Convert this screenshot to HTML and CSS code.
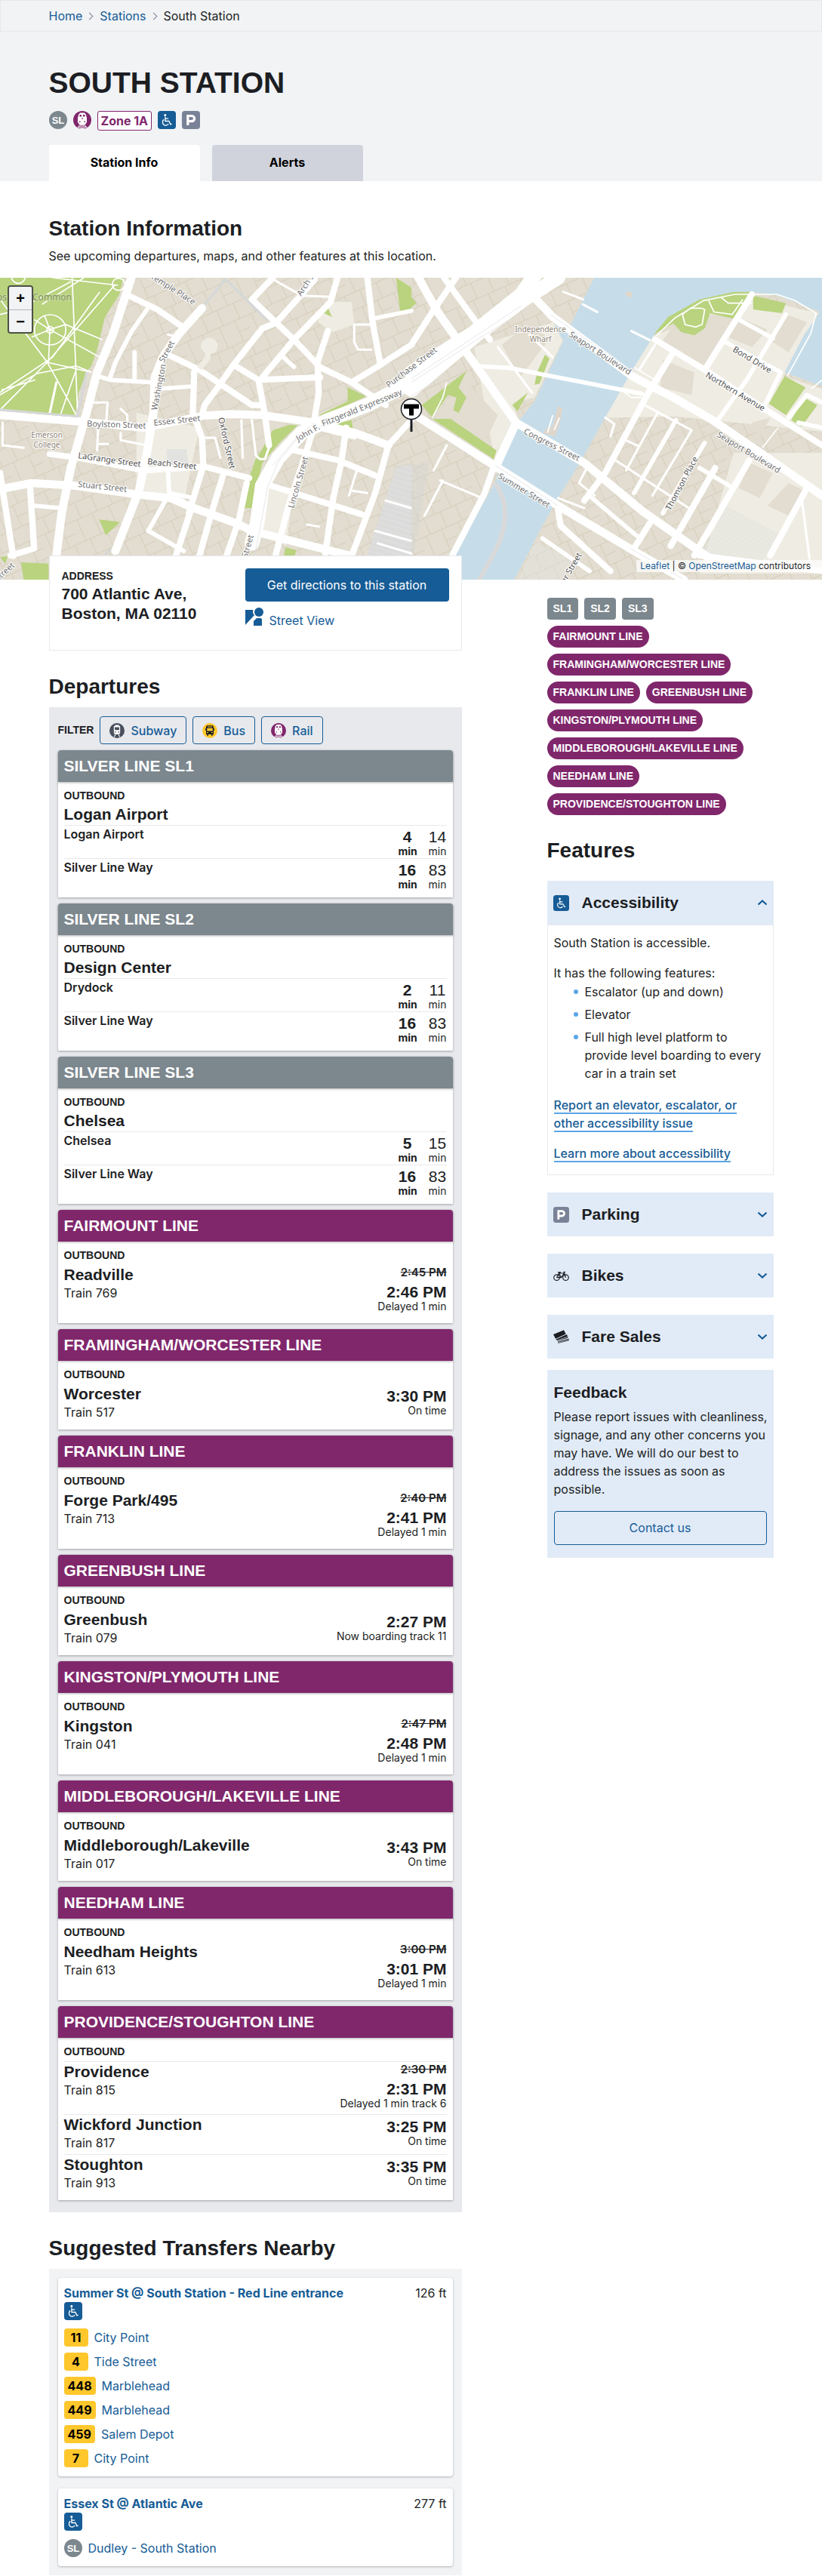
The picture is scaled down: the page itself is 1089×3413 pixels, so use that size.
FILE: index.html
```html
<!DOCTYPE html>
<html lang="en">
<head>
<meta charset="utf-8">
<meta name="viewport" content="width=device-width, initial-scale=1">
<title>South Station | MBTA</title>
<link rel="stylesheet" href="styles.css">
</head>
<body>
<svg class="sprite" aria-hidden="true">
  <symbol id="i-access" viewBox="0 0 24 24">
    <rect width="24" height="24" rx="4" fill="#165c96"/>
    <circle cx="9.8" cy="5.6" r="1.5" fill="#fff"/>
    <path d="M9.9 7.5v6h5l2 4.300 1.700-.7M10 10.200h4.200M8.200 11.400a4.200 4.200 0 1 0 6 5.600" fill="none" stroke="#fff" stroke-width="1.300"/>
  </symbol>
  <symbol id="i-parking" viewBox="0 0 24 24">
    <rect width="24" height="24" rx="4" fill="#7a8297"/>
    <path d="M7.800 19V6.500h5.200a3.500 3.500 0 0 1 0 7.200H7.800" fill="none" stroke="#fff" stroke-width="3.200"/>
  </symbol>
  <symbol id="i-sl" viewBox="0 0 24 24">
    <circle cx="12" cy="12" r="12" fill="#7c878e"/>
    <text x="12" y="16.500" class="sl-text">SL</text>
  </symbol>
  <symbol id="i-rail" viewBox="0 0 24 24">
    <circle cx="12" cy="12" r="12" fill="#80276c"/>
    <path d="M7 5 9 2.500h6L17 5l1 5v5l-2.500 3.500h-7L6 15v-5z" fill="#fff"/>
    <path d="M8.500 18.500h7l3 3.500a12 12 0 0 1-13 0z" fill="#fff"/>
    <path d="M8 20h8M7 22h10" stroke="#80276c" stroke-width="1"/>
    <path d="M8.500 5H11v2.500H8.500zM13 5h2.500v2.500H13zM11.400 9h1.200v2h-1.200zM7.900 13.500h1.600V15H7.900zM14.500 13.500h1.600V15h-1.600z" fill="#80276c"/>
  </symbol>
  <symbol id="i-subway" viewBox="0 0 24 24">
    <circle cx="12" cy="12" r="12" fill="#494f5c"/>
    <path d="M9 3h6v1.500h1.500L17 6v10l-1.500 2h-7L7 16V6l.5-1.500H9z" fill="#fff"/>
    <path d="M8.500 6.500h7v4.500h-7zM8.300 13.500h2V15h-2zM13.700 13.500h2V15h-2z" fill="#494f5c"/>
    <path d="m9.500 18.500-2 3.500M14.500 18.500l2 3.500" stroke="#fff" stroke-width="1.400"/>
  </symbol>
  <symbol id="i-bus" viewBox="0 0 24 24">
    <circle cx="12" cy="12" r="12" fill="#ffc72c"/>
    <path d="M7.500 4h9L18 6v12h-1.500v2h-2v-2h-5v2h-2v-2H6V6zM5 8h1v4H5zM18 8h1v4h-1z" fill="#1c1e23"/>
    <path d="M8.500 5.500h7v1h-7zM7.500 8h9v4.500h-9zM7.500 14.500h2V16h-2zM14.500 14.500h2V16h-2z" fill="#ffc72c"/>
  </symbol>
  <symbol id="i-street" viewBox="0 0 24 24">
    <path d="M0 3h10.500a6.500 6.500 0 0 0 1.500 7L0 23zM11 24V18l4-4h5q2 0 2 2v8z" fill="#165c96"/>
    <circle cx="18" cy="6" r="6" fill="#165c96"/>
  </symbol>
  <symbol id="i-bike" viewBox="0 0 24 24">
    <g fill="none" stroke="#1c1e23" stroke-width="1.400">
      <circle cx="5.200" cy="14.500" r="4.300"/><circle cx="18.800" cy="14.500" r="4.300"/>
      <path d="M5.200 14.500 8.500 8h8L12 14.500H5.200M8.500 8l3.500 6.500M18.800 14.500 16 6h2.500M7 6.500h3.500L9 8"/>
    </g>
  </symbol>
  <symbol id="i-fare" viewBox="0 0 24 24">
    <path d="M0 8 16 1.500l3 6L3.500 14.500z" fill="#1c1e23"/>
    <path d="M4 15.500 20.500 8l2 5-16 5zM6.500 19l17-4.500.5 3-16.500 4z" fill="#1c1e23"/>
    <path d="m5 17.500 16.500-6M7 20.500l17-4" stroke="#e1ebf7" stroke-width=".8"/>
  </symbol>
  <symbol id="i-chevron" viewBox="0 0 14 8">
    <path d="m1.500 1.500 5.500 5 5.500-5" fill="none" stroke="#165c96" stroke-width="2.200"/>
  </symbol>
</svg>

<header class="page-header">
  <nav class="breadcrumbs" aria-label="Breadcrumb">
    <ol class="container">
      <li><a href="#">Home</a></li>
      <li><a href="#">Stations</a></li>
      <li>South Station</li>
    </ol>
  </nav>
  <div class="container">
    <h1>SOUTH STATION</h1>
    <div class="header-icons">
      <svg class="icon"><use href="#i-sl"/></svg>
      <svg class="icon"><use href="#i-rail"/></svg>
      <span class="zone">Zone 1A</span>
      <svg class="icon"><use href="#i-access"/></svg>
      <svg class="icon"><use href="#i-parking"/></svg>
    </div>
    <nav class="tabs" aria-label="Station pages">
      <a class="tab is-active" href="#">Station Info</a>
      <a class="tab" href="#">Alerts</a>
    </nav>
  </div>
</header>

<section class="container intro">
  <h2>Station Information</h2>
  <p>See upcoming departures, maps, and other features at this location.</p>
</section>

<div class="map">
  <svg class="map-canvas" viewBox="0 0 1089 400" preserveAspectRatio="xMidYMid slice" role="img" aria-label="Map around South Station">
    <defs>
      <pattern id="lots" width="46" height="52" patternUnits="userSpaceOnUse" patternTransform="rotate(-24)">
        <path d="M0 .5h46M14.500 0v22M30.500 22v30M0 22.500h46M8.500 22v30M38.500 0v22M30 38.500h16" fill="none" stroke="#d6cebc" stroke-width="1"/>
      </pattern>
      <pattern id="tracks" width="7" height="20" patternUnits="userSpaceOnUse" patternTransform="rotate(18)">
        <path d="M2 0v16M5 6v14" stroke="#d2d3d5" stroke-width="2"/>
      </pattern>
      <pattern id="bays" width="9" height="9" patternUnits="userSpaceOnUse" patternTransform="rotate(28)">
        <path d="M2 0v9" stroke="#e3e4df" stroke-width="5"/>
      </pattern>
    </defs>
    <rect width="1089" height="400" fill="#e2ddd0"/>
    <rect width="1089" height="400" fill="url(#lots)"/>

    <g class="west" transform="matrix(.3476 0 0 .3333 0 -8)">
      <path d="M1240 120h100l10 90-80 30-60-40zM520 560l240 60-60 300-180-60zM1030 850l90 10-30 230-90-60z" fill="#efece3"/>
      <path class="park" d="M0 24h470l-15 66-55 90-30 130-20 60-20 30-30 80-15 105-285-37zM1510 24l58 40v90l-43 6zM1325 460l70 35-65 32-5 25 70-22-4 18-170 60v-40l104-53zM1210 612l130-22 5 30-45 36zM1100 610h35l-70 70-65 80-40 180h-30l20-120 22-70 30-50 38-70zM378 985l80 10-55 52zM1088 1095l42 12-8 24-40-4zM0 1135l30-5-10 30zM80 1155l105 5v64H90zM1225 160l20-30 20 50z"/>
      <path d="M635 705h75l10 65-85-5zM1510 780l58-10v360h-170z" fill="#e2e2e0"/>
      <path d="M1510 770l58-10v370h-170z" fill="url(#tracks)"/>
      <g id="west-roads" class="roads">
        <path class="l" d="M505 10 430 250l-60 150-40 160-60 220-35 180-20 168"/>
        <path class="l" d="m0 570 300 25 250 25 230-48 100-6 120 4 200 30 150 40 130 50"/>
        <path class="l" d="m770 145-90 105-60 90-30 80-5 140-25 160-30 150-90 240"/>
        <path class="m" d="m480 90 120 60 90 65M1040 24l-80 86 80 80 90 90 90 100 120 60 130 90M740 400l-5 160 35 100 5 110-55 190"/>
        <path class="m" d="m640 330 120 60 200 140h40M1200 30l-50 60-100 115-50 20-110 145-60 90-50 70-10 40M1290 10l-30 110-140 150-120 150M890 370l95 60 235-10M985 430l25 140 15 120"/>
        <path class="m" d="m1400 24 20 176 30 170-110 70M1568 290l-118 80M1250 235l-40 125 5 120-25 160-30 100-60 190-50 198"/>
        <path class="x" d="m1568 440-168 90-150 60-100 50-90 100-60 110-20 150-20 80"/>
        <path class="m" d="m1120 710 170 40 140 60M1320 620l-20 140-30 140-30 220M1568 590l-88 100-50 190-90 250M1200 615l150 40"/>
        <path class="m" d="m190 725 110 15 250 50 230-15 170 45M1030 850l350 115"/>
        <path class="l" d="m0 865 120-25 160 10 240 35 130 15 90 40 160 60 60 30 370 98"/>
        <path class="m" d="m850 810-50 170-40 150M940 840l-30 150-50 150M0 800l50 330M115 860l15 240-90 28M730 940l-60 190"/>
        <path class="s" d="m560 150-60 90-60 120-20 60M370 415l50 15 160 10M513 320v110M610 465l130-10M130 930l105 10M640 790l5 90 95 20M630 910l-65 120 135 80M1430 185l138-30M1080 340l40 38"/>
        <path class="t" d="M350 520h60l-5 80M375 600l-5 110M372 685h40M460 545l25 25v50M460 640v30l90 18M780 660h40l20 80M920 590l5 150M960 590l15 140 15 15h20l15-45M1350 210h70M1350 210v70l15 30h50M1040 30l110 65 110 5M640 250l40 10M1170 1005l45 8M1360 790l-30 100M1340 870l60 10M1470 910l98 30M1430 1030l138 40M1440 1080l128 40M10 600v90l80 10M215 440l-25 120"/>
      </g>
      <path class="paths" d="M0 170l60-15L270 40M0 480l200-140 180-260M0 550l180-190 260-310M275 24l20 520M0 110l180 250 80 150 30 60M0 490l140-85 150-30 60 25M180 360l170 40M135 430l-130 40M130 190l60 40 190 110M190 230l-5 130M190 230l60-20 140 60M120 260l70-30M170 175l20 55M230 570l60-180M320 24 160 130M200 24l250 30"/>
      <circle class="paths" cx="191" cy="231" r="60"/><circle class="paths" cx="191" cy="231" r="13" fill="#c5b9a3"/><circle class="paths" cx="70" cy="20" r="26"/><circle class="paths" cx="452" cy="50" r="24"/>
      <path d="M330 400 295 575 0 548M780 130l80-100 160 165M400 1125l22-22" fill="none" stroke="#d6d7d9" stroke-width="9"/>
      <circle cx="798" cy="295" r="32" fill="#efece3"/><path d="m798 295-8 50-30 40" fill="none" stroke="#efece3" stroke-width="22"/>
      <path class="thin" d="M1568 470 1400 545l-160 62-110 60-70 90-40 100-30 170-20 100M1200 600l-70 60-90 110"/>
    </g>

    <g class="east" transform="matrix(.347 0 0 .3333 545 -8)">
      <path d="M320 760l90-160-20-80 80-20 110-230-40-70-300 100zM925 255l380-150 250 60-135 250 148 50v170l-560-60-460 10-200 180zM1230 720h338v480H1100z" fill="#efece3"/>
      <path d="M1000 215l200-60 40 40-120 190-170-100zM960 350l120 50-10 90-120-30zM1250 180l110 50-60 70-90-40zM1430 170l80 30-70 120-60-40zM345 290l110-90 70 70-110 150zM1290 760l90 40-50 100-80-40zM1440 840l60 30-60 100-80-40zM200 430l130 140-50 110-190-100zM1300 600l70-20-40 80z" fill="#e2ddd0"/>
      <path d="M705 10h863v445l-143-55 75-150 60-90-160-65-100-15-150 20-150 80-75 75-75 125-110 200-100 185-80 135-60 110-110 220H180l-20-96 160-298 80-230 70-90 110-240-35-62 63-2z" fill="#c6dde9"/>
      <path class="park" d="M925 250l55-70 120-70 130-30h75l-70 108-95-23-20 60-40 28-50-13-30-35zM1305 95l125 30-15 40-110-15zM1425 415l80 45-75 110-65-45zM1500 500l50 30-60 85-40-25zM40 530l170-135-30 65 30 40-30 62-20-12 12-50-32-10-60 90zM80 585h70l175 125-10 35zM470 450l10-50 30-70 17 15-37 100zM385 530l60-50-40 75zM0 100l20 25-20 15zM490 90l25-55-8 50z"/>
      <path d="M560 535l18 8-15 70-15 42-45-12 15-25h20zM815 90l15-15 15 12-10 18z" fill="#dfd6cb"/>
      <path d="M0 770l70-20-60 370H0z" fill="url(#tracks)"/>
      <path d="M1200 930l200 110-60 110-230-30zM470 1080l160 60-50 84H410z" fill="url(#bays)"/>
      <g id="east-roads" class="roads">
        <path class="x" d="M0 470 250 250 430 110 560 24"/><path class="x" d="M0 400l240-160L420 90l60-90"/>
        <path class="l" d="m20 10 80 150 110 160 190 280-80 180"/>
        <path class="m" d="M170 24 80 160 0 290M125 24l115 166 60 80M320 760l-40 120-125 250"/>
        <path class="l" d="m0 560 300 200 260 170 290 180 190 114M400 600l260 160 220 190 260 190"/>
        <path class="l" d="m430 60 110 120 310 240 150 80 150 90 350 250 68 50"/>
        <path class="s" d="m250 375 130 8 130 27 370 75"/>
        <path class="m" d="m930 270 190 120 250 170 198 130M1000 320 900 490 740 800l-80 110M1300 90l-180 300M1160 780 990 1090M1290 750l-210 378M1510 860l-140 268M560 950l10 60 190 180M910 1000l-60 100M1100 1128l468 62"/>
        <path class="s" d="m1430 170-150 260-110 160M1200 280l210 120-70 150M1250 190l130 75M1120 680 960 960M1010 590 850 880M690 900l170 150M1568 620l-90-20M1440 580l70-90 58 30M1100 780l120 75M500 1060l180 130"/>
        <path class="t" d="M940 560 820 790M1070 630 920 890M780 750l280 190M890 530l180 100M820 670l50 25M560 900l100 40M700 890l-60-50 30-60M330 300l130 180M450 250l90 90M110 830l160 70M120 830l-70 140M85 790l50-100M1490 900l30 240M870 390l60-100M580 80l75 30M655 130l55 30M840 236l70 36M740 580l35 25-15 50"/>
      </g>
      <path class="paths" d="M935 255l70-70 110-70 120-25h160l70 25 80 50-20 80-90 170M1135 115l20 45 70 10 40-60M1180 100l30 25h90M1120 150l-10 60-25 10-40-10-10-40 30-25h40zM135 440l-15 60-40 80M520 640l20-70M545 630l20-50M850 380l80 50M800 470l40 30h40M1568 430l-40 35M1340 700l60-80"/>
      <path d="M320 840q80 120-10 290l-60 110" fill="none" stroke="#d9d9d9" stroke-width="17"/>
      <path class="thin" d="M0 440 250 270 440 150M0 495l210-140M0 425l160-110 260-180M530 170l320 230M560 930l-240-160M835 1100l200 120"/>
    </g>

    <g class="labels">
      <text class="area" x="9" y="30" text-anchor="end">Bos</text>
      <text class="area" x="95" y="30" text-anchor="end">Common</text>
      <text transform="translate(256 36) rotate(32)" text-anchor="end">Temple Place</text>
      <text transform="translate(399 25) rotate(-57)">Arch Street</text>
      <text transform="translate(208 176) rotate(-79)">Washington</text>
      <text transform="translate(217 113) rotate(-62)">Street</text>
      <text transform="translate(115 197) rotate(2)">Boylston Street</text>
      <text transform="translate(204 196) rotate(-6)">Essex Street</text>
      <text class="dark" transform="translate(289 186) rotate(77)">Oxford Street</text>
      <text class="poi" x="62" y="212">Emerson</text><text class="poi" x="62" y="225">College</text>
      <text class="dark" transform="translate(103 239) rotate(8)">LaGrange Street</text>
      <text class="dark" transform="translate(195 247) rotate(6)">Beach Street</text>
      <text transform="translate(103 277) rotate(6)">Stuart Street</text>
      <text transform="translate(395 217) rotate(-30)">John F.</text>
      <text transform="translate(428 197) rotate(-22)">Fitzgerald Expressway</text>
      <text transform="translate(389 306) rotate(-74)">Lincoln Street</text>
      <text transform="translate(515 146) rotate(-37)">Purchase Street</text>
      <text transform="translate(336 342) rotate(-74)" text-anchor="end">South Street</text>
      <text transform="translate(20 382) rotate(-42)" text-anchor="end">Street</text>
      <text class="poi" x="716" y="72">Independence</text><text class="poi" x="716" y="85">Wharf</text>
      <text transform="translate(753 77) rotate(33)">Seaport Boulevard</text>
      <text transform="translate(693 206) rotate(27)">Congress Street</text>
      <text transform="translate(659 265) rotate(31)">Summer Street</text>
      <text class="dark" transform="translate(888 309) rotate(-62)">Thomson Place</text>
      <text class="dark" transform="translate(970 97) rotate(31)">Bond Drive</text>
      <text class="dark" transform="translate(934 131) rotate(31)">Northern Avenue</text>
      <text transform="translate(949 210) rotate(31)">Seaport Boulevard</text>
      <text class="dark" transform="translate(771 367) rotate(-60)" text-anchor="end">Sleeper Street</text>
    </g>
    <g class="marker">
      <path d="M545 188v16" stroke="#1c1e23" stroke-width="3"/>
      <circle cx="545" cy="174" r="13.500" fill="#fff" stroke="#1c1e23" stroke-width="1.500"/>
      <path d="M535 167.500h20v6h-7v9h-6v-9h-7z" fill="#000"/>
    </g>
  </svg>
  <div class="zoom-control">
    <button type="button" aria-label="Zoom in">+</button>
    <button type="button" aria-label="Zoom out">−</button>
  </div>
  <div class="attribution"><a href="#">Leaflet</a> | © <a href="#">OpenStreetMap</a> contributors</div>
</div>

<main class="container columns">
  <div class="col-main">
    <section class="address-card">
      <div>
        <h3 class="label">ADDRESS</h3>
        <p class="address">700 Atlantic Ave,<br>Boston, MA 02110</p>
      </div>
      <div class="address-actions">
        <a class="btn-primary" href="#">Get directions to this station</a>
        <a class="street-view" href="#"><svg class="icon"><use href="#i-street"/></svg>Street View</a>
      </div>
    </section>

    <h2>Departures</h2>
    <section class="departures">
      <div class="filters">
        <span class="label">FILTER</span>
        <button type="button"><svg><use href="#i-subway"/></svg>Subway</button>
        <button type="button"><svg><use href="#i-bus"/></svg>Bus</button>
        <button type="button"><svg><use href="#i-rail"/></svg>Rail</button>
      </div>

      <article class="line silver">
        <h3>SILVER LINE SL1</h3>
        <div class="line-body">
          <p class="label">OUTBOUND</p>
          <p class="headsign">Logan Airport</p>
          <div class="stop"><b>Logan Airport</b><span class="eta next">4<small>min</small></span><span class="eta">14<small>min</small></span></div>
          <div class="stop"><b>Silver Line Way</b><span class="eta next">16<small>min</small></span><span class="eta">83<small>min</small></span></div>
        </div>
      </article>
      <article class="line silver">
        <h3>SILVER LINE SL2</h3>
        <div class="line-body">
          <p class="label">OUTBOUND</p>
          <p class="headsign">Design Center</p>
          <div class="stop"><b>Drydock</b><span class="eta next">2<small>min</small></span><span class="eta">11<small>min</small></span></div>
          <div class="stop"><b>Silver Line Way</b><span class="eta next">16<small>min</small></span><span class="eta">83<small>min</small></span></div>
        </div>
      </article>
      <article class="line silver">
        <h3>SILVER LINE SL3</h3>
        <div class="line-body">
          <p class="label">OUTBOUND</p>
          <p class="headsign">Chelsea</p>
          <div class="stop"><b>Chelsea</b><span class="eta next">5<small>min</small></span><span class="eta">15<small>min</small></span></div>
          <div class="stop"><b>Silver Line Way</b><span class="eta next">16<small>min</small></span><span class="eta">83<small>min</small></span></div>
        </div>
      </article>

      <article class="line rail">
        <h3>FAIRMOUNT LINE</h3>
        <div class="line-body">
          <p class="label">OUTBOUND</p>
          <div class="train"><div class="dest"><b>Readville</b><span>Train 769</span></div><div class="when"><s>2:45 PM</s><b>2:46 PM</b><small>Delayed 1 min</small></div></div>
        </div>
      </article>
      <article class="line rail">
        <h3>FRAMINGHAM/WORCESTER LINE</h3>
        <div class="line-body">
          <p class="label">OUTBOUND</p>
          <div class="train"><div class="dest"><b>Worcester</b><span>Train 517</span></div><div class="when"><b>3:30 PM</b><small>On time</small></div></div>
        </div>
      </article>
      <article class="line rail">
        <h3>FRANKLIN LINE</h3>
        <div class="line-body">
          <p class="label">OUTBOUND</p>
          <div class="train"><div class="dest"><b>Forge Park/495</b><span>Train 713</span></div><div class="when"><s>2:40 PM</s><b>2:41 PM</b><small>Delayed 1 min</small></div></div>
        </div>
      </article>
      <article class="line rail">
        <h3>GREENBUSH LINE</h3>
        <div class="line-body">
          <p class="label">OUTBOUND</p>
          <div class="train"><div class="dest"><b>Greenbush</b><span>Train 079</span></div><div class="when"><b>2:27 PM</b><small>Now boarding track 11</small></div></div>
        </div>
      </article>
      <article class="line rail">
        <h3>KINGSTON/PLYMOUTH LINE</h3>
        <div class="line-body">
          <p class="label">OUTBOUND</p>
          <div class="train"><div class="dest"><b>Kingston</b><span>Train 041</span></div><div class="when"><s>2:47 PM</s><b>2:48 PM</b><small>Delayed 1 min</small></div></div>
        </div>
      </article>
      <article class="line rail">
        <h3>MIDDLEBOROUGH/LAKEVILLE LINE</h3>
        <div class="line-body">
          <p class="label">OUTBOUND</p>
          <div class="train"><div class="dest"><b>Middleborough/Lakeville</b><span>Train 017</span></div><div class="when"><b>3:43 PM</b><small>On time</small></div></div>
        </div>
      </article>
      <article class="line rail">
        <h3>NEEDHAM LINE</h3>
        <div class="line-body">
          <p class="label">OUTBOUND</p>
          <div class="train"><div class="dest"><b>Needham Heights</b><span>Train 613</span></div><div class="when"><s>3:00 PM</s><b>3:01 PM</b><small>Delayed 1 min</small></div></div>
        </div>
      </article>
      <article class="line rail branches">
        <h3>PROVIDENCE/STOUGHTON LINE</h3>
        <div class="line-body">
          <p class="label">OUTBOUND</p>
          <div class="train"><div class="dest"><b>Providence</b><span>Train 815</span></div><div class="when"><s>2:30 PM</s><b>2:31 PM</b><small>Delayed 1 min track 6</small></div></div>
          <div class="train"><div class="dest"><b>Wickford Junction</b><span>Train 817</span></div><div class="when"><b>3:25 PM</b><small>On time</small></div></div>
          <div class="train"><div class="dest"><b>Stoughton</b><span>Train 913</span></div><div class="when"><b>3:35 PM</b><small>On time</small></div></div>
        </div>
      </article>
    </section>

    <h2>Suggested Transfers Nearby</h2>
    <section class="transfers">
      <article class="transfer">
        <header><a href="#">Summer St @ South Station - Red Line entrance</a><span>126 ft</span></header>
        <svg class="icon"><use href="#i-access"/></svg>
        <ul>
          <li><span class="bus">11</span><a href="#">City Point</a></li>
          <li><span class="bus">4</span><a href="#">Tide Street</a></li>
          <li><span class="bus">448</span><a href="#">Marblehead</a></li>
          <li><span class="bus">449</span><a href="#">Marblehead</a></li>
          <li><span class="bus">459</span><a href="#">Salem Depot</a></li>
          <li><span class="bus">7</span><a href="#">City Point</a></li>
        </ul>
      </article>
      <article class="transfer">
        <header><a href="#">Essex St @ Atlantic Ave</a><span>277 ft</span></header>
        <svg class="icon"><use href="#i-access"/></svg>
        <ul>
          <li><svg class="icon"><use href="#i-sl"/></svg><a href="#">Dudley - South Station</a></li>
        </ul>
      </article>
    </section>
  </div>

  <aside class="col-side">
    <div class="badges">
      <a class="badge sl" href="#">SL1</a><a class="badge sl" href="#">SL2</a><a class="badge sl" href="#">SL3</a>
    </div>
    <div class="badges">
      <a class="badge" href="#">FAIRMOUNT LINE</a>
      <a class="badge" href="#">FRAMINGHAM/WORCESTER LINE</a>
      <a class="badge" href="#">FRANKLIN LINE</a>
      <a class="badge" href="#">GREENBUSH LINE</a>
      <a class="badge" href="#">KINGSTON/PLYMOUTH LINE</a>
      <a class="badge" href="#">MIDDLEBOROUGH/LAKEVILLE LINE</a>
      <a class="badge" href="#">NEEDHAM LINE</a>
      <a class="badge" href="#">PROVIDENCE/STOUGHTON LINE</a>
    </div>

    <h2>Features</h2>
    <div class="accordion">
      <section>
        <h3><button type="button" aria-expanded="true"><svg class="feature-icon"><use href="#i-access"/></svg>Accessibility<svg class="chevron up"><use href="#i-chevron"/></svg></button></h3>
        <div class="panel">
          <p>South Station is accessible.</p>
          <p>It has the following features:</p>
          <ul>
            <li>Escalator (up and down)</li>
            <li>Elevator</li>
            <li>Full high level platform to provide level boarding to every car in a train set</li>
          </ul>
          <p><a href="#">Report an elevator, escalator, or other accessibility issue</a></p>
          <p><a href="#">Learn more about accessibility</a></p>
        </div>
      </section>
      <section><h3><button type="button" aria-expanded="false"><svg class="feature-icon"><use href="#i-parking"/></svg>Parking<svg class="chevron"><use href="#i-chevron"/></svg></button></h3></section>
      <section><h3><button type="button" aria-expanded="false"><svg class="feature-icon"><use href="#i-bike"/></svg>Bikes<svg class="chevron"><use href="#i-chevron"/></svg></button></h3></section>
      <section><h3><button type="button" aria-expanded="false"><svg class="feature-icon"><use href="#i-fare"/></svg>Fare Sales<svg class="chevron"><use href="#i-chevron"/></svg></button></h3></section>
    </div>

    <section class="feedback">
      <h3>Feedback</h3>
      <p>Please report issues with cleanliness, signage, and any other concerns you may have. We will do our best to address the issues as soon as possible.</p>
      <a class="btn-outline" href="#">Contact us</a>
    </section>
  </aside>
</main>
</body>
</html>
```
FILE: styles.css
```css
:root {
  --blue: #165c96;
  --ink: #1c1e23;
  --line: #e8e9ed;
  --purple: #80276c;
  --silver: #7c878e;
  --pale: #e1ebf7;
  --grey: #f1f3f5;
  --heading: "Liberation Sans", Arial, sans-serif;
}

* { box-sizing: border-box; }

body {
  margin: 0;
  background: #fff;
  color: var(--ink);
  font: 16px/24px Inter, sans-serif;
}

a { color: var(--blue); text-decoration: none; }
h1, h2, h3, p, ul, ol { margin: 0; padding: 0; }
h1, h2, h3 { font-family: var(--heading); font-weight: 700; }
h2 { font-size: 28px; line-height: 36px; }
ul, ol { list-style: none; }
button { font: inherit; cursor: pointer; }
svg { display: block; flex: none; }

.sprite { position: absolute; width: 0; height: 0; }
.sl-text { font: 700 13px var(--heading); fill: #fff; text-anchor: middle; }
.icon { width: 24px; height: 24px; }
.container { max-width: 960px; margin: 0 auto; }
.label { font: 700 14px/21px var(--heading); }

/* Header */
.page-header { background: var(--grey); }
.breadcrumbs { border: 1px solid var(--line); padding: 8px 0; }
.breadcrumbs ol { display: flex; }
.breadcrumbs li + li { display: flex; align-items: center; }
.breadcrumbs li + li::before {
  content: "";
  width: 6px;
  height: 6px;
  margin: 0 10px 0 6px;
  border: solid #7a8297;
  border-width: 1px 1px 0 0;
  transform: rotate(45deg);
}
.page-header h1 { padding-top: 44px; font-size: 39px; line-height: 48px; }
.header-icons { display: flex; gap: 8px; margin: 13px 0 19px; }
.zone {
  height: 26px;
  padding: 0 4px;
  border: 1px solid var(--purple);
  border-radius: 3px;
  background: #fff;
  color: var(--purple);
  font-weight: 700;
}
.tabs { display: flex; gap: 16px; }
.tab {
  width: 200px;
  padding: 11px 0 13px;
  border-radius: 4px 4px 0 0;
  background: #d0d3dc;
  color: #000;
  font-weight: 700;
  text-align: center;
}
.tab.is-active { background: #fff; }

.intro { padding: 45px 0 17px; }
.intro p { margin-top: 6px; }

/* Map */
.map { position: relative; height: 400px; }
.map-canvas { width: 100%; height: 100%; }
.park { fill: #b9d37e; }
.roads { fill: none; stroke: #fff; stroke-linecap: round; stroke-linejoin: round; }
.roads .x { stroke-width: 56px; }
.roads .l { stroke-width: 32px; }
.roads .m { stroke-width: 24px; }
.roads .s { stroke-width: 17px; }
.roads .t { stroke-width: 9px; }
.paths { fill: none; stroke: #fff; stroke-width: 5px; }
.thin { fill: none; stroke: #dcdcdc; stroke-width: 2px; }
.labels text {
  font: 11px "Noto Sans", sans-serif;
  fill: #6f6f6f;
  stroke: #fff;
  stroke-width: 2px;
  paint-order: stroke;
}
.labels .dark { fill: #505050; }
.labels .area { font-size: 12px; fill: #7f8f5f; stroke: #c9dd9d; }
.labels .poi { font-size: 10px; fill: #8b8274; text-anchor: middle; }
.zoom-control {
  position: absolute;
  top: 10px;
  left: 10px;
  border: 2px solid #4c5146;
  border-radius: 4px;
  overflow: hidden;
}
.zoom-control button {
  display: block;
  width: 30px;
  height: 30px;
  padding: 0;
  border: 0;
  background: var(--grey);
  color: #000;
  font: 700 20px/28px var(--heading);
}
.zoom-control button + button { border-top: 1px solid #b5b8be; }
.attribution {
  position: absolute;
  right: 0;
  bottom: 10px;
  padding: 0 15px 0 5px;
  background: rgba(255, 255, 255, .7);
  font-size: 12px;
  line-height: 16px;
}

/* Columns */
.columns { display: grid; grid-template-columns: 547fr 300fr; gap: 113px; align-items: start; }
.col-main { position: relative; min-width: 0; margin-top: -32px; }
.col-main h2 { margin: 30px 0 9px; }

.address-card {
  display: grid;
  grid-template-columns: 1fr 270px;
  min-height: 126px;
  padding: 16px;
  border: 1px solid var(--line);
  background: #fff;
}
.address { font: 700 21px/26px var(--heading); }
.btn-primary {
  display: block;
  padding: 10px;
  border-radius: 4px;
  background: var(--blue);
  color: #fff;
  text-align: center;
}
.street-view { display: flex; gap: 8px; margin-top: 8px; line-height: 34px; }

.departures { padding: 12px 12px 16px; background: var(--line); }
.filters { display: flex; align-items: center; gap: 8px; margin-bottom: 8px; }
.filters button {
  display: flex;
  align-items: center;
  gap: 8px;
  height: 37px;
  padding: 0 12px;
  border: 1px solid var(--blue);
  border-radius: 4px;
  background: none;
  color: var(--blue);
  font-weight: 500;
}
.filters svg { width: 20px; height: 20px; }

.line { border-radius: 4px 4px 0 0; background: #fff; box-shadow: 0 1px 3px rgba(28, 30, 35, .35); }
.line + .line { margin-top: 8px; }
.line h3 {
  padding: 7px 8px;
  border-radius: 4px 4px 0 0;
  color: #fff;
  font-size: 21px;
  line-height: 28px;
  box-shadow: 0 1px 3px rgba(28, 30, 35, .35);
}
.silver h3 { background: var(--silver); }
.rail h3 { background: var(--purple); }
.line-body { padding: 8px; }
.headsign { font: 700 21px/28px var(--heading); }

.stop { display: flex; gap: 16px; border-top: 1px solid var(--line); padding: 0 0 1px; }
.stop b { flex: 1; line-height: 22px; font-weight: 600; }
.eta { width: 24px; padding-top: 4px; font: 21px/22px var(--heading); text-align: center; }
.eta small { display: block; font: 14px/16px Inter, sans-serif; }
.eta.next, .eta.next small { font-weight: 700; }

.rail .label { margin-bottom: 2px; }
.train { display: flex; justify-content: space-between; }
.branches .train { border-top: 1px solid var(--line); }
.dest { padding-bottom: 4px; }
.dest b { display: block; font: 700 21px/26px var(--heading); }
.dest span { display: block; line-height: 22px; }
.when { padding-bottom: 6px; text-align: right; }
.when s { display: block; font-size: 15px; line-height: 20px; font-weight: 600; }
.when b { display: block; padding-top: 5px; font: 700 21px/22px var(--heading); }
.when small { display: block; font-size: 14px; line-height: 16px; }

.transfers { padding: 12px; background: var(--grey); }
.transfer {
  padding: 8px 8px 12px;
  border-radius: 4px;
  background: #fff;
  box-shadow: 0 1px 3px rgba(28, 30, 35, .3);
}
.transfer + .transfer { margin-top: 16px; }
.transfer header { display: flex; justify-content: space-between; }
.transfer header a { font-weight: 700; }
.transfer ul { display: grid; gap: 8px; margin-top: 11px; }
.transfer li { display: flex; gap: 8px; }
.bus {
  min-width: 32px;
  padding: 0 5px;
  border-radius: 4px;
  background: #ffc72c;
  color: #000;
  font-weight: 700;
  text-align: center;
}

/* Sidebar */
.col-side { padding-top: 24px; }
.col-side h2 { margin: 29px 0 22px; }
.badges { display: flex; flex-wrap: wrap; gap: 8px; }
.badges + .badges { margin-top: 8px; }
.badge {
  padding: 4px 8px;
  border-radius: 15px;
  background: var(--purple);
  color: #fff;
  font: 700 14px/21px var(--heading);
}
.badge.sl { border-radius: 4px; background: var(--silver); }

.accordion { display: grid; gap: 23px; }
.accordion button {
  display: flex;
  align-items: center;
  width: 100%;
  height: 58px;
  padding: 0 8px;
  border: 0;
  background: var(--pale);
  color: var(--ink);
  font: 700 21px/28px var(--heading);
}
.feature-icon { width: 21px; height: 21px; margin-right: 17px; }
.chevron { width: 14px; height: 8px; margin-left: auto; }
.chevron.up { transform: rotate(180deg); }
.panel { padding: 11px 8px 16px; border: 1px solid var(--line); }
.panel p + p { margin-top: 16px; }
.panel ul { display: grid; gap: 6px; padding: 1px 0 18px 41px; }
.panel li { position: relative; }
.panel li::before {
  content: "";
  position: absolute;
  top: 9px;
  left: -15px;
  width: 6px;
  height: 6px;
  border-radius: 50%;
  background: #5ba5e6;
}
.panel a { border-bottom: 2px solid #5ba5e6; font-weight: 500; }

.feedback { margin-top: 15px; padding: 16px 9px 17px; background: var(--pale); }
.feedback h3 { font-size: 21px; line-height: 28px; }
.feedback p { margin: 6px -5px 17px 0; }
.btn-outline {
  display: block;
  padding: 10px;
  border: 1px solid var(--blue);
  border-radius: 4px;
  line-height: 23px;
  text-align: center;
}
```
